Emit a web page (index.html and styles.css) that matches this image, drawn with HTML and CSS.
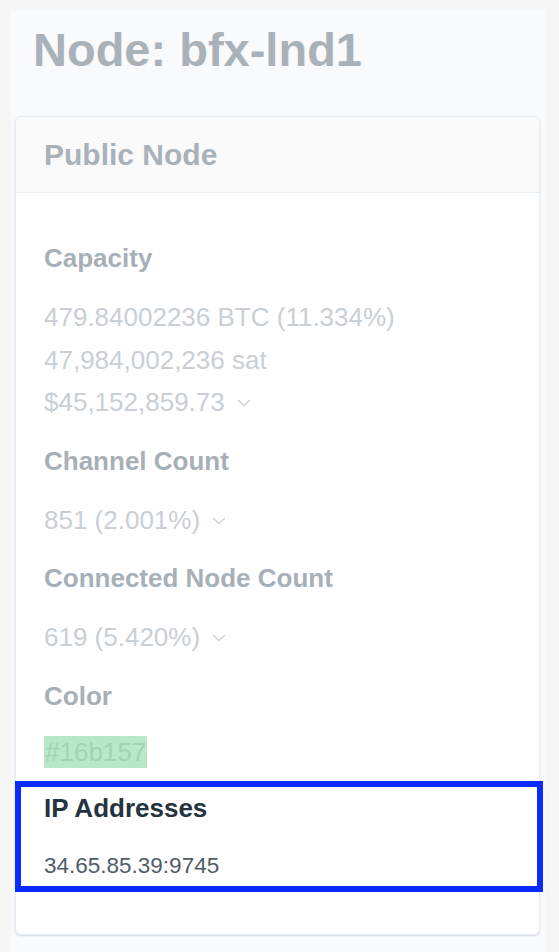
FILE: index.html
```html
<!DOCTYPE html>
<html>
<head>
<meta charset="utf-8">
<link rel="stylesheet" href="styles.css">
</head>
<body>
<div class="panel">
  <h1 class="title">Node: bfx-lnd1</h1>
  <div class="card">
    <div class="card-header">Public Node</div>
    <div class="card-body">
      <div class="field">
        <div class="label">Capacity</div>
        <div class="value">479.84002236 BTC (11.334%)</div>
        <div class="value">47,984,002,236 sat</div>
        <div class="value">$45,152,859.73 <svg class="chev" viewBox="0 0 14 8" width="14" height="8"><path d="M1 1l6 5.5L13 1" fill="none" stroke="currentColor" stroke-width="1.4"/></svg></div>
      </div>
      <div class="field">
        <div class="label">Channel Count</div>
        <div class="value">851 (2.001%) <svg class="chev" viewBox="0 0 14 8" width="14" height="8"><path d="M1 1l6 5.5L13 1" fill="none" stroke="currentColor" stroke-width="1.4"/></svg></div>
      </div>
      <div class="field">
        <div class="label">Connected Node Count</div>
        <div class="value">619 (5.420%) <svg class="chev" viewBox="0 0 14 8" width="14" height="8"><path d="M1 1l6 5.5L13 1" fill="none" stroke="currentColor" stroke-width="1.4"/></svg></div>
      </div>
      <div class="field">
        <div class="label">Color</div>
        <div class="value color"><span class="swatch">#16b157</span></div>
      </div>
      <div class="field highlight">
        <div class="label dark">IP Addresses</div>
        <div class="value ip">34.65.85.39:9745</div>
      </div>
    </div>
  </div>
</div>
</body>
</html>
```

FILE: styles.css
```css
html, body {
  margin: 0;
  padding: 0;
}
body {
  background: #f6f6f6;
  font-family: "Liberation Sans", Arial, sans-serif;
  width: 559px;
  height: 952px;
  overflow: hidden;
}
.panel {
  margin: 10px 13px 0 11px;
  background: #f8fafc;
  padding: 13px 6px 8px 4px;
  height: 921px;
}
.title {
  margin: 0 0 0 18px;
  font-size: 47px;
  line-height: 54px;
  font-weight: bold;
  color: #aab2b9;
}
.card {
  margin-top: 39px;
  background: #fff;
  border: 1px solid #e7edf2;
  border-radius: 6px;
  box-shadow: 0 1px 2px rgba(150, 165, 180, 0.35);
}
.card-header {
  height: 75px;
  line-height: 76px;
  background: #fafafa;
  border-bottom: 1px solid #e7edf2;
  border-radius: 6px 6px 0 0;
  padding: 0 28px;
  font-size: 30px;
  font-weight: bold;
  color: #aab2b9;
}
.card-body {
  padding: 44px 28px 42px;
}
.field {
  margin-bottom: 16px;
}
.label {
  font-size: 26px;
  font-weight: bold;
  line-height: 42px;
  color: #a8b0b7;
  margin-bottom: 17px;
}
.label.dark {
  color: #23343f;
}
.value {
  font-size: 26px;
  line-height: 42.5px;
  color: #c9cfd4;
  display: flex;
  align-items: center;
  gap: 12px;
}
.chev {
  color: #cdd3d8;
  margin-top: 2px;
}
.value.color {
  height: 31px;
  align-items: flex-start;
}
.swatch {
  background: #b9e8c8;
  color: #9fd5b2;
  padding: 0 1px;
  line-height: 32px;
  margin-top: 2px;
}
.highlight {
  margin: 0 -32px 0 -29px;
  padding: 0 24px 0 23px;
  border: 6px solid #0a2bff;
  margin-top: 6px;
}
.value.ip {
  font-size: 22.5px;
  color: #4f5d68;
  line-height: 40px;
}
```
